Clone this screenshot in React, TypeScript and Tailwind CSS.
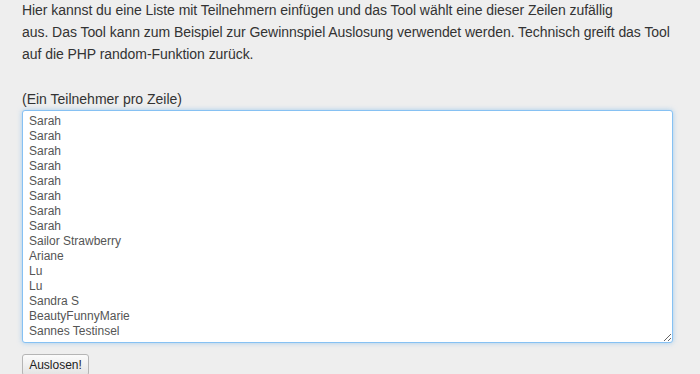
import React from "react";

const names = [
  "Sarah","Sarah","Sarah","Sarah","Sarah","Sarah","Sarah","Sarah",
  "Sailor Strawberry","Ariane","Lu","Lu","Sandra S","BeautyFunnyMarie","Sannes Testinsel",
];

export default function App() {
  return (
    <div className="min-h-[374px] w-[700px] bg-[#eeeeee] text-[#333333] font-['Liberation_Sans',Arial,sans-serif] overflow-hidden">
      <div className="pl-[22px] pr-[27px] pt-0">
        <p className="text-[14px] leading-[22px] -mt-[1px] tracking-[-0.05px]">
          <span className="whitespace-nowrap">Hier kannst du eine Liste mit Teilnehmern einfügen und das Tool wählt eine dieser Zeilen zufällig</span>
          <br />
          <span className="whitespace-nowrap">aus. Das Tool kann zum Beispiel zur Gewinnspiel Auslosung verwendet werden. Technisch greift das Tool</span>
          <br />
          <span className="whitespace-nowrap">auf die PHP random-Funktion zurück.</span>
        </p>
        <div className="h-[23px]" />
        <div className="text-[14px] leading-[22px]">(Ein Teilnehmer pro Zeile)</div>
        <textarea
          readOnly
          value={names.join("\n")}
          className="block w-[651px] h-[233px] bg-white border border-[#86c1f3] rounded-[3px] shadow-[0_0_5px_rgba(102,175,233,0.55)] px-[6px] pt-[3px] text-[12px] leading-[15px] text-[#555555] outline-none font-['Liberation_Sans',Arial,sans-serif] resize overflow-hidden"
        />
        <div className="pt-[9px]">
          <button className="h-[22px] w-[67px] text-[12px] leading-[20px] text-[#222] border border-[#b5b5b5] rounded-[3px] bg-gradient-to-b from-[#fbfbfb] to-[#e4e4e4] font-['Liberation_Sans',Arial,sans-serif]">
            Auslosen!
          </button>
        </div>
      </div>
    </div>
  );
}
